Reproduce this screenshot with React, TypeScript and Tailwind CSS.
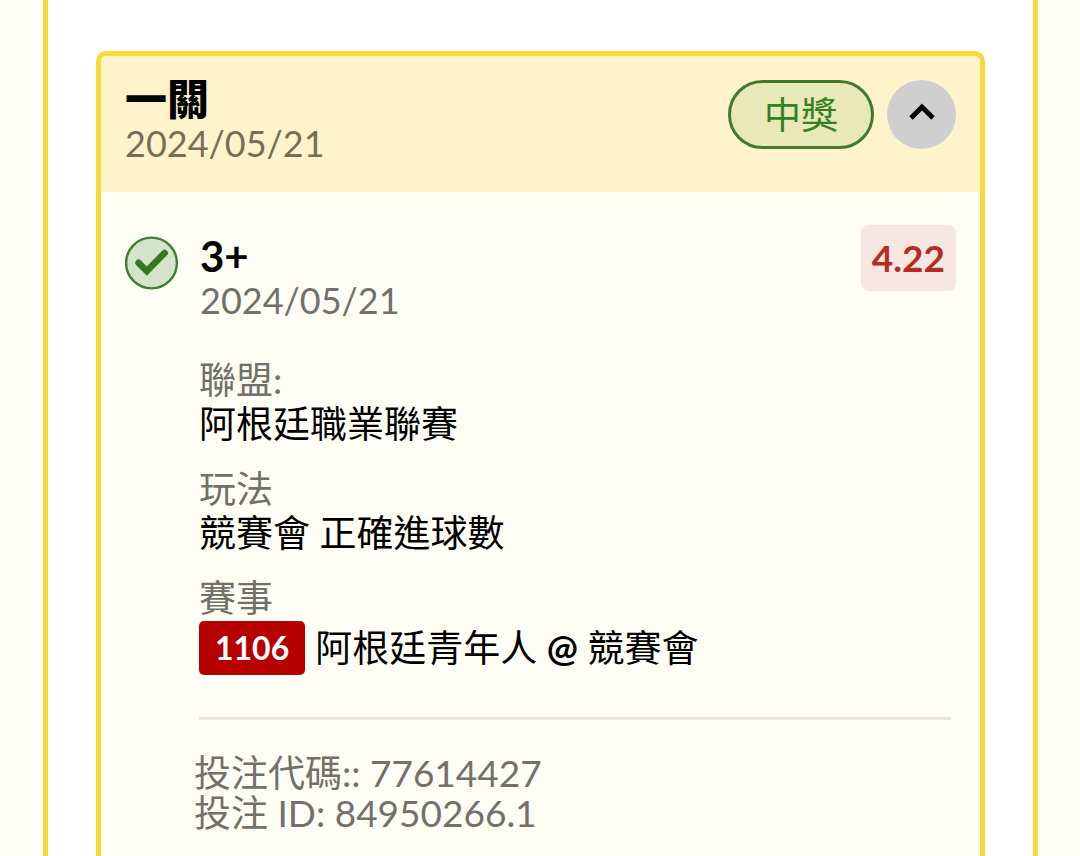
const bet = {
  title: "一關",
  date: "2024/05/21",
  status: "中獎",
  pick: "3+",
  pickDate: "2024/05/21",
  odds: "4.22",
  code: "77614427",
  id: "84950266.1",
};

const details = [
  { label: "聯盟:", value: "阿根廷職業聯賽" },
  { label: "玩法", value: "競賽會 正確進球數" },
];

function ChevronUpIcon() {
  return (
    <svg width="28" height="28" viewBox="0 0 28 28" fill="none" aria-hidden="true">
      <path d="M3 17 L14 6 L25 17" stroke="black" strokeWidth="4.8" />
    </svg>
  );
}

function WonIcon() {
  return (
    <svg
      className="mt-3 shrink-0"
      width="54"
      height="54"
      viewBox="0 0 54 54"
      fill="none"
      role="img"
      aria-label="中獎"
    >
      <circle cx="26.5" cy="27" r="25.4" fill="#d4e3cc" stroke="#3f7f33" strokeWidth="2.4" />
      <path
        d="M13.6 26.8 L21.8 35 L39.6 17"
        stroke="#31781f"
        strokeWidth="6.6"
        strokeLinecap="round"
      />
    </svg>
  );
}

export default function App() {
  return (
    <div className="min-h-screen overflow-hidden bg-[#fffef6] font-['Lato','Noto_Sans_CJK_TC',sans-serif] text-[37px] leading-[44px] text-black">
      <main className="ml-[43px] mr-[42px] flex min-h-screen flex-col border-x-[5px] border-[#f8d83a] bg-white px-12 pt-[51px]">
        <article className="flex-1 overflow-hidden rounded-t-[10px] border-x-[5px] border-t-[5px] border-[#f8d83a] bg-[#fffef4]">
          <header className="flex items-start justify-between bg-[#fff3cc] px-6 pb-[27px] pt-[21px]">
            <div>
              <h1 className="text-[42px] font-black">{bet.title}</h1>
              <p className="text-[36px] text-[#766f56]">{bet.date}</p>
            </div>
            <div className="mt-[3px] flex items-center gap-[13px]">
              <span className="flex h-[69px] items-center rounded-full border-[3px] border-[#3f7a2d] bg-[#e9e8b9] px-[33px] text-[#35801f]">
                {bet.status}
              </span>
              <button
                type="button"
                aria-label="收合"
                className="flex size-[69px] items-center justify-center rounded-full bg-[#cfcfcf]"
              >
                <ChevronUpIcon />
              </button>
            </div>
          </header>

          <section className="flex items-start px-6 pt-8">
            <WonIcon />
            <div className="ml-5 min-w-0 flex-1">
              <div className="flex items-start justify-between">
                <div className="pl-px pt-[10px]">
                  <h2 className="text-[42px] font-bold">{bet.pick}</h2>
                  <p className="text-[36px] text-[#71706a]">{bet.pickDate}</p>
                </div>
                <span className="mt-px rounded-lg bg-[#f7e7e0] px-[11px] py-[11px] font-bold text-[#b42d25]">
                  {bet.odds}
                </span>
              </div>

              <dl className="mt-9 space-y-[21px]">
                {details.map((item) => (
                  <div key={item.label}>
                    <dt className="text-[#71706a]">{item.label}</dt>
                    <dd>{item.value}</dd>
                  </div>
                ))}
                <div>
                  <dt className="text-[#71706a]">賽事</dt>
                  <dd className="mt-px flex items-center gap-[10px]">
                    <span className="rounded-[5px] bg-[#b60000] px-4 py-[5px] text-[32px] font-bold text-white">
                      1106
                    </span>
                    <span>
                      阿根廷青年人 <span className="font-bold">@</span> 競賽會
                    </span>
                  </dd>
                </div>
              </dl>

              <hr className="mr-[5px] mt-[42px] border-t-[3px] border-[#e9e6e0]" />

              <div className="-ml-[5px] mt-[33px] leading-10 text-[#71706a]">
                <p>投注代碼:: {bet.code}</p>
                <p>投注 ID: {bet.id}</p>
              </div>
            </div>
          </section>
        </article>
      </main>
    </div>
  );
}
